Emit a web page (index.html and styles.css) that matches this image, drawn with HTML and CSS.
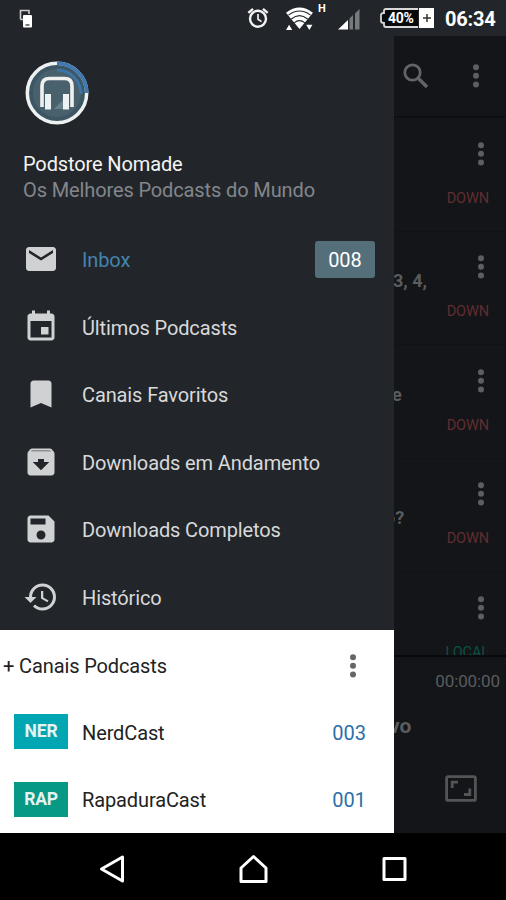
FILE: index.html
```html
<!DOCTYPE html>
<html lang="pt">
<head>
<meta charset="utf-8">
<title>Podstore Nomade</title>
<link rel="stylesheet" href="styles.css">
</head>
<body>
<svg class="defs" width="0" height="0">
  <symbol id="dots" viewBox="0 0 8 26"><circle cx="4" cy="4.2" r="3"/><circle cx="4" cy="12.8" r="3"/><circle cx="4" cy="21.4" r="3"/></symbol>
</svg>
<div class="screen">
  <header class="status">
    <svg class="status-device" viewBox="0 0 14 19"><path d="M1.500 10.500V1.500H10V5M1.500 10.500H4" fill="none" stroke="#ccc" stroke-width="1.600"/><rect x="4" y="6" width="9" height="12.500" rx="1" fill="#fff"/><path d="M6.500 16h4" stroke="#222" stroke-width="1.200"/></svg>
    <svg class="status-alarm" viewBox="0 0 22 22"><g fill="none" stroke="#f2f2f2"><circle cx="11" cy="11.800" r="8" stroke-width="2.400"/><path d="M11 7v5.200l3.500 2.400" stroke-width="1.700"/><path d="M1.300 5.800 6 1.800M20.700 5.800 16 1.800" stroke-width="2.400"/></g></svg>
    <svg class="status-wifi" viewBox="0 0 30 26"><path d="M1 7Q15-4 29 7L15 24Z" fill="#fff"/><g fill="none" stroke="#22262a" stroke-width="1.100"><path d="M3.500 9.500Q15 1 26.500 9.500"/><path d="M6.500 13.500Q15 6.500 23.500 13.500"/><path d="M9.500 17.500Q15 13 20.500 17.500"/></g><path d="M1 25l3.200-5.500L7.400 25zM22 19.500h6.400L25.200 25z" fill="#fff"/></svg>
    <span class="status-h">H</span>
    <svg class="status-signal" viewBox="0 0 22 22"><path d="M0 21.500 10 12v9.500z" fill="#fff"/><path d="M11.500 10.500 15 7v14.500h-3.500zM17 5.500 21.500 1v20.500H17z" fill="#777a7c"/></svg>
    <div class="battery">
      <svg class="battery-shell" viewBox="0 0 54 20"><path d="M38 1H6Q4 1 4 3v2Q1 5 1 7v6q0 2 3 2v2q0 2 2 2h32" fill="#08090a" stroke="#d8d8d8" stroke-width="1.800"/><path d="M39 0h15v20H39z" fill="#fff"/><path d="M43 10h8M47 6v8" stroke="#333" stroke-width="1.500"/></svg>
      <span class="battery-text">40%</span>
    </div>
    <span class="clock">06:34</span>
  </header>

  <main class="main">
    <aside class="drawer">
      <div class="profile">
        <svg class="logo" viewBox="0 0 64 64"><circle cx="32" cy="32" r="29" fill="#3c5663"/><circle cx="32" cy="32" r="24" fill="#49616d"/><circle cx="32" cy="32" r="29.700" fill="none" stroke="#eef1f2" stroke-width="3.500"/><path d="M32 2.300A29.700 29.700 0 0 1 61.700 32" fill="none" stroke="#4079b0" stroke-width="3.800"/><path d="M32 9a24 24 0 0 1 24 24" fill="none" stroke="#3d74a5" stroke-width="3"/><path d="M29 48 40 37v11z" fill="#69808b"/><path d="M17 46V25Q17 17.500 24.500 17.500H39.500Q47 17.500 47 25V46" fill="none" stroke="#f0f0ee" stroke-width="3.600"/><path d="M20 33h6v15.500h-6zM38 33h6v15.500h-6z" fill="#edf3f5"/></svg>
        <div class="name">Podstore Nomade</div>
        <div class="tagline">Os Melhores Podcasts do Mundo</div>
      </div>
      <nav class="menu">
        <div class="row active"><svg class="icon" viewBox="0 0 24 24"><path d="M20 4H4c-1.100 0-2 .900-2 2v12c0 1.100.900 2 2 2h16c1.100 0 2-.900 2-2V6c0-1.100-.900-2-2-2zm0 4-8 5-8-5V6l8 5 8-5z"/></svg><span class="label">Inbox</span><span class="badge">008</span></div>
        <div class="row"><svg class="icon" viewBox="0 0 24 24"><path d="M17 12h-5v5h5zM16 1v2H8V1H6v2H5c-1.100 0-2 .900-2 2v14c0 1.100.900 2 2 2h14c1.100 0 2-.900 2-2V5c0-1.100-.900-2-2-2h-1V1zm3 18H5V8h14z"/></svg><span class="label">Últimos Podcasts</span></div>
        <div class="row"><svg class="icon" viewBox="0 0 24 24"><path d="M17 3H7c-1.100 0-2 .900-2 2v16l7-3 7 3V5c0-1.100-.900-2-2-2z"/></svg><span class="label">Canais Favoritos</span></div>
        <div class="row"><svg class="icon" viewBox="0 0 24 24"><path fill-rule="evenodd" d="M20.540 5.230l-1.390-1.680C18.880 3.210 18.470 3 18 3H6c-.470 0-.880.210-1.160.550L3.460 5.230C3.170 5.570 3 6.020 3 6.500V19c0 1.100.900 2 2 2h14c1.100 0 2-.900 2-2V6.500c0-.480-.170-.930-.460-1.270zM12 17.500 6.500 12H10v-2h4v2h3.500z"/><path class="lid" d="M5.100 5l.8-1h12l.95 1z"/></svg><span class="label">Downloads em Andamento</span></div>
        <div class="row"><svg class="icon" viewBox="0 0 24 24"><path d="M17 3H5c-1.110 0-2 .900-2 2v14c0 1.100.890 2 2 2h14c1.100 0 2-.900 2-2V7zm-5 16c-1.660 0-3-1.340-3-3s1.340-3 3-3 3 1.340 3 3-1.340 3-3 3zm3-10H5V5h10z"/></svg><span class="label">Downloads Completos</span></div>
        <div class="row"><svg class="icon" viewBox="0 0 24 24"><path d="M13 3a9 9 0 0 0-9 9H1l3.890 3.890.070.140L9 12H6c0-3.870 3.130-7 7-7s7 3.130 7 7-3.130 7-7 7c-1.930 0-3.680-.790-4.940-2.060l-1.420 1.420A8.954 8.954 0 0 0 13 21a9 9 0 0 0 0-18zm-1 5v5l4.280 2.540.720-1.210-3.500-2.080V8z"/></svg><span class="label">Histórico</span></div>
      </nav>
      <section class="channels">
        <div class="channels-head"><span class="channels-title">+ Canais Podcasts</span><svg class="dots"><use href="#dots"/></svg></div>
        <div class="channel"><span class="tile cyan">NER</span><span class="label">NerdCast</span><span class="count">003</span></div>
        <div class="channel"><span class="tile green">RAP</span><span class="label">RapaduraCast</span><span class="count">001</span></div>
      </section>
    </aside>

    <section class="content">
      <div class="toolbar">
        <svg class="search" viewBox="0 0 26 26"><circle cx="9.500" cy="9.500" r="7.700" fill="none" stroke="#626466" stroke-width="2.800"/><path d="M15.500 15.500 24 24" stroke="#626466" stroke-width="3.600"/></svg>
        <svg class="dots"><use href="#dots"/></svg>
      </div>
      <div class="list">
        <article class="item"><svg class="dots"><use href="#dots"/></svg><span class="title"></span><span class="state">DOWN</span></article>
        <article class="item"><svg class="dots"><use href="#dots"/></svg><span class="title">3, 4,</span><span class="state">DOWN</span></article>
        <article class="item"><svg class="dots"><use href="#dots"/></svg><span class="title letter">e</span><span class="state">DOWN</span></article>
        <article class="item"><svg class="dots"><use href="#dots"/></svg><span class="title cut">o?</span><span class="state">DOWN</span></article>
        <article class="item"><svg class="dots"><use href="#dots"/></svg><span class="title"></span><span class="state local">LOCAL</span></article>
      </div>
      <div class="player">
        <span class="time">00:00:00</span>
        <span class="track">vo</span>
        <svg class="expand" viewBox="0 0 32 27"><g fill="none" stroke="#525456" stroke-width="2.800"><rect x="1.600" y="1.600" width="28.800" height="23.800" rx="1.500"/><path d="M7.200 13V7.200H13M24.800 13.500V19.500H19"/></g></svg>
      </div>
    </section>
  </main>

  <footer class="navbar">
    <svg viewBox="0 0 30 30"><path d="M4.500 15 25.500 3v24z"/></svg>
    <svg viewBox="0 0 30 30"><path d="M15.500 2.500 28 14v13.500H3V14z"/></svg>
    <svg viewBox="0 0 30 30"><path d="M5 4.500h21v21H5z"/></svg>
  </footer>
</div>
</body>
</html>
```
FILE: styles.css
```css
* { box-sizing: border-box; }
body { margin: 0; background: #000; font-family: Roboto, "Liberation Sans", sans-serif; }
svg { display: block; flex: none; }
.defs { position: absolute; }
.screen { width: 506px; height: 900px; display: flex; flex-direction: column; overflow: hidden; }

.status { height: 36px; background: #22262a; display: flex; align-items: flex-start; color: #fff; }
.status-device { width: 14px; height: 19px; margin: 9px 0 0 19px; }
.status-alarm { width: 22px; height: 22px; margin: 7px 0 0 214px; }
.status-wifi { width: 29px; height: 25px; margin: 6px 0 0 16px; }
.status-h { width: 9px; margin: 2px 0 0 4px; font-size: 11px; line-height: 13px; font-weight: 700; }
.status-signal { width: 22px; height: 22px; margin: 8px 0 0 11px; }
.battery { display: grid; width: 54px; height: 20px; margin: 8px 0 0 20px; align-items: center; }
.battery > * { grid-area: 1 / 1; }
.battery-shell { width: 54px; height: 20px; }
.battery-text { padding-left: 8px; font-size: 14px; font-weight: 700; letter-spacing: -0.3px; line-height: 20px; }
.clock { margin: 7px 0 0 11px; font-size: 20px; line-height: 24px; font-weight: 700; letter-spacing: -0.2px; }

.main { height: 797px; display: flex; }
.drawer { width: 394px; flex: none; background: #22262a; display: flex; flex-direction: column; letter-spacing: -0.12px; }
.profile { height: 190px; padding: 25px 0 0 23px; }
.logo { width: 64px; height: 64px; margin-left: 2px; }
.name { margin-top: 26px; color: #f4f4f4; font-size: 20px; line-height: 26px; white-space: nowrap; }
.tagline { color: #83868a; font-size: 20px; line-height: 27px; white-space: nowrap; }
.menu { height: 404px; display: grid; grid-template-rows: repeat(6, 67.500px); }
.row { display: flex; align-items: center; padding: 0 19px 0 23px; }
.icon { width: 36px; height: 36px; margin-top: -1px; fill: #d0d1d2; }
.lid { fill: #8f9192; }
.label { font-size: 20px; line-height: 26px; white-space: nowrap; }
.row .label { margin-left: 23px; padding-top: 0.8px; color: #d8d9da; }
.row.active .label { color: #4683ae; }
.badge { width: 60px; height: 37px; margin-left: auto; border-radius: 3px; background: #546e7a; color: #fff; font-size: 20px; line-height: 39px; text-align: center; letter-spacing: 0; }

.channels { flex: 1; background: #fff; color: #222; display: flex; flex-direction: column; }
.channels-head { height: 68px; padding: 4px 37px 0 3px; display: flex; align-items: center; justify-content: space-between; }
.channels-title { font-size: 20px; line-height: 26px; white-space: nowrap; }
.dots { width: 8px; height: 26px; fill: #5c5e60; }
.channels .dots { fill: #666; }
.channel { height: 67.500px; display: flex; align-items: center; padding: 0 28px 0 14px; }
.tile { width: 54px; height: 35px; color: #e5f3f2; font-size: 17.500px; font-weight: 700; line-height: 35px; text-align: center; letter-spacing: -0.2px; }
.cyan { background: #00a7b3; }
.green { background: #079886; }
.channel .label { margin-left: 14px; padding-top: 1.500px; }
.count { margin-left: auto; padding-top: 1.500px; color: #2b70a8; font-size: 20px; line-height: 26px; letter-spacing: 0; }

.content { flex: 1; min-width: 0; background: #131518; overflow: hidden; display: flex; flex-direction: column; }
.toolbar { height: 82px; border-bottom: 2px solid #0d0f11; display: flex; align-items: center; justify-content: space-between; padding: 0 26px 1px 9px; }
.search { width: 26px; height: 26px; }
.list { height: 537px; overflow: hidden; }
.item { height: 113.500px; border-bottom: 1px solid #101214; display: grid; grid-template-rows: 49px 1fr; padding: 22.500px 17px 0 0; grid-template-columns: 1fr auto; }
.item .dots { grid-area: 1 / 2; justify-self: end; margin-right: 4px; }
.title { grid-area: 1 / 1; margin: 17px -12px 0 -1px; align-self: start; color: #5a5c5e; font-size: 18px; line-height: 20px; font-weight: 700; white-space: nowrap; }
.title.letter { margin-left: -2px; }
.title.cut { margin: 27px 0 0 -9px; }
.state { grid-area: 2 / 2; color: #612d31; font-size: 14.500px; line-height: 18px; letter-spacing: -0.1px; }
.state.local { color: #0b5143; }
.player { flex: 1; border-top: 2px solid #08090a; display: flex; flex-direction: column; padding: 12px 6px 0 0; }
.time { align-self: flex-end; color: #5a5c5e; font-size: 17px; line-height: 24px; letter-spacing: -0.1px; }
.track { margin: 20px 0 0 -5px; color: #5a5c5e; font-size: 21px; line-height: 26px; font-weight: 700; }
.expand { width: 32px; height: 27px; margin: 36px 0 0 51px; }

.navbar { height: 67px; background: #000; display: flex; align-items: center; justify-content: center; gap: 111px; padding-top: 5px; }
.navbar svg { width: 30px; height: 30px; fill: none; stroke: #fff; stroke-width: 3; stroke-linejoin: round; }
```
